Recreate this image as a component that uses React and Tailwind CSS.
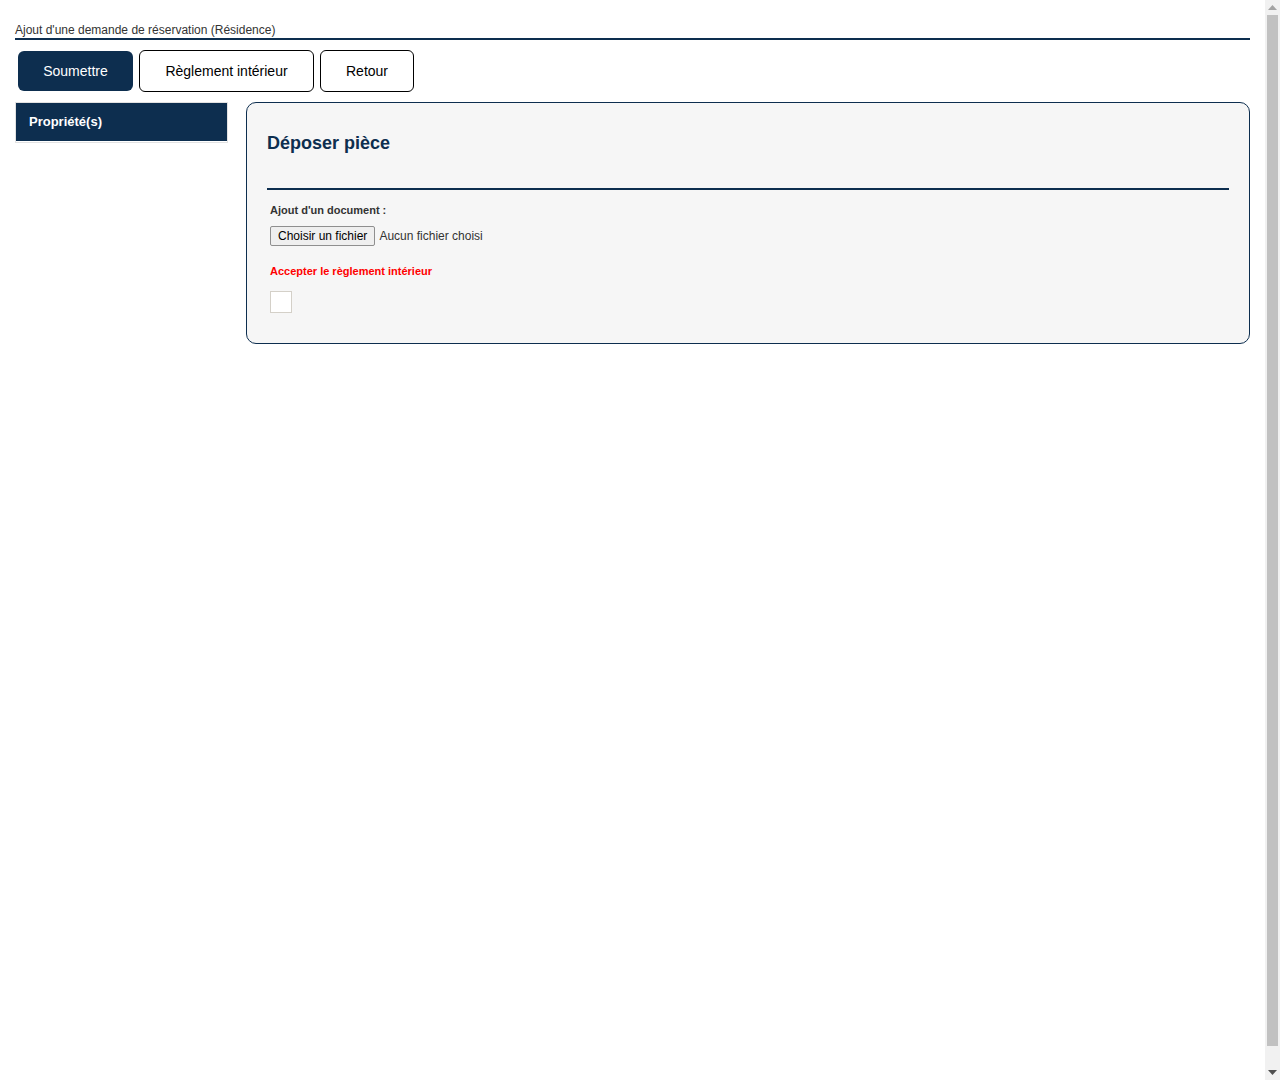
import React from "react";

function FakeScrollbar() {
  return (
    <div className="w-[15px] h-[1080px] bg-[#f1f1f1] flex flex-col items-center shrink-0">
      <div className="h-[15px] w-full flex items-center justify-center">
        <svg width="9" height="5" viewBox="0 0 9 5"><path d="M0 5 L4.5 0 L9 5 Z" fill="#a3a3a3" /></svg>
      </div>
      <div className="w-[11px] h-[1031px] bg-[#c1c1c1]"></div>
      <div className="flex-1"></div>
      <div className="h-[15px] w-full flex items-center justify-center">
        <svg width="9" height="5" viewBox="0 0 9 5"><path d="M0 0 L9 0 L4.5 5 Z" fill="#505050" /></svg>
      </div>
    </div>
  );
}

export default function App() {
  return (
    <div className="flex h-[1080px] overflow-hidden bg-white font-['Liberation_Sans',Arial,sans-serif]">
      <div className="flex-1 px-[15px] text-[#333]">
        <div className="pt-[22px] text-[12px] leading-[16px] text-[#333] border-b-2 border-[#0d2e4f]">
          Ajout d'une demande de réservation (Résidence)
        </div>
        <div className="flex items-center gap-[6px] pl-[3px] mt-[10px]">
          <button className="h-[40px] w-[115px] rounded-[6px] bg-[#0d2e4f] text-white text-[14px]">
            Soumettre
          </button>
          <button className="h-[42px] w-[175px] rounded-[6px] border border-black bg-white text-black text-[14px]">
            Règlement intérieur
          </button>
          <button className="h-[42px] w-[94px] rounded-[6px] border border-black bg-white text-black text-[14px]">
            Retour
          </button>
        </div>
        <div className="flex items-start gap-[18px] mt-[10px]">
          <div className="w-[213px] border border-[#e2e2e2] pb-[1px]">
            <div className="h-[38px] bg-[#0d2e4f] text-white text-[13px] font-bold flex items-center pl-[13px]">
              Propriété(s)
            </div>
          </div>
          <div className="flex-1 rounded-[10px] border border-[#0d2e4f] bg-[#f6f6f6] px-[20px] pt-[29px] pb-[30px]">
            <h2 className="text-[18px] leading-[22px] font-bold text-[#0d2e4f]">Déposer pièce</h2>
            <div className="mt-[34px] border-b-2 border-[#0d2e4f]"></div>
            <div className="pl-[3px]">
              <div className="mt-[13px] text-[11px] leading-[14px] font-bold text-[#333]">Ajout d'un document :</div>
              <div className="mt-[9px] flex items-center gap-[4px] text-[12px]">
                <span className="h-[20px] px-[7px] flex items-center rounded-[2px] border border-[#8f8f8f] bg-[#efefef] text-black">
                  Choisir un fichier
                </span>
                <span className="text-[#333]">Aucun fichier choisi</span>
              </div>
              <div className="mt-[18px] text-[11px] leading-[14px] font-bold text-[#ff0000]">
                Accepter le règlement intérieur
              </div>
              <div className="mt-[13px] h-[22px] w-[22px] border border-[#d4d0c8] bg-white"></div>
            </div>
          </div>
        </div>
      </div>
      <FakeScrollbar />
    </div>
  );
}
